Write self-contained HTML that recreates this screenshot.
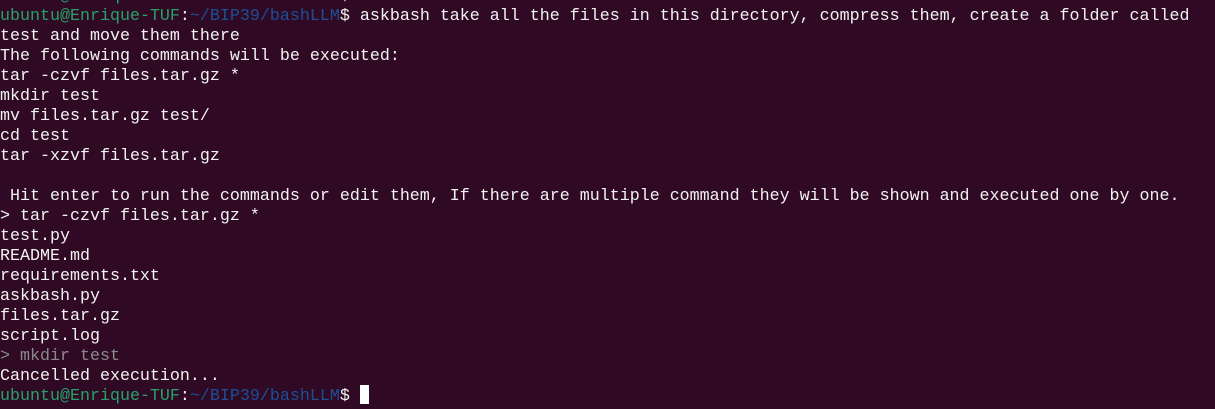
<html><head><style>
body{margin:0;background:#300a24;width:1215px;height:409px;overflow:hidden}
pre{margin:0;position:absolute;top:-13px;left:0;font-family:"Liberation Mono",monospace;font-size:16.67px;line-height:20px;color:#f2f2f2}
.g{color:#26a269}.b{color:#1c4f96}.d{color:#8a8a8a}
.c{display:inline-block;width:9px;height:19px;background:#fff;vertical-align:-4px}
.l{position:relative;top:-2px}
</style></head><body><pre><span class="g">ubuntu@Enrique-TUF</span>:<span class="b">~/BIP39/bashLLM</span>$ ls
<span class="g">ubuntu@Enrique-TUF</span>:<span class="b">~/BIP39/bashLLM</span>$ askbash take all the files in this directory, compress them, create a folder called
test and move them there
The following commands will be executed:
tar -czvf files.tar.gz *
mkdir test
mv files.tar.gz test/
cd test
tar -xzvf files.tar.gz

 Hit enter to run the commands or edit them, If there are multiple command they will be shown and executed one by one.
&gt; tar -czvf files.tar.gz *
test.py
README.md
requirements.txt
askbash.py
files.tar.gz
script.log
<span class="d">&gt; mkdir test</span>
Cancelled execution...
<span class="l"><span class="g">ubuntu@Enrique-TUF</span>:<span class="b">~/BIP39/bashLLM</span>$ <span class="c"></span></span></pre></body></html>
